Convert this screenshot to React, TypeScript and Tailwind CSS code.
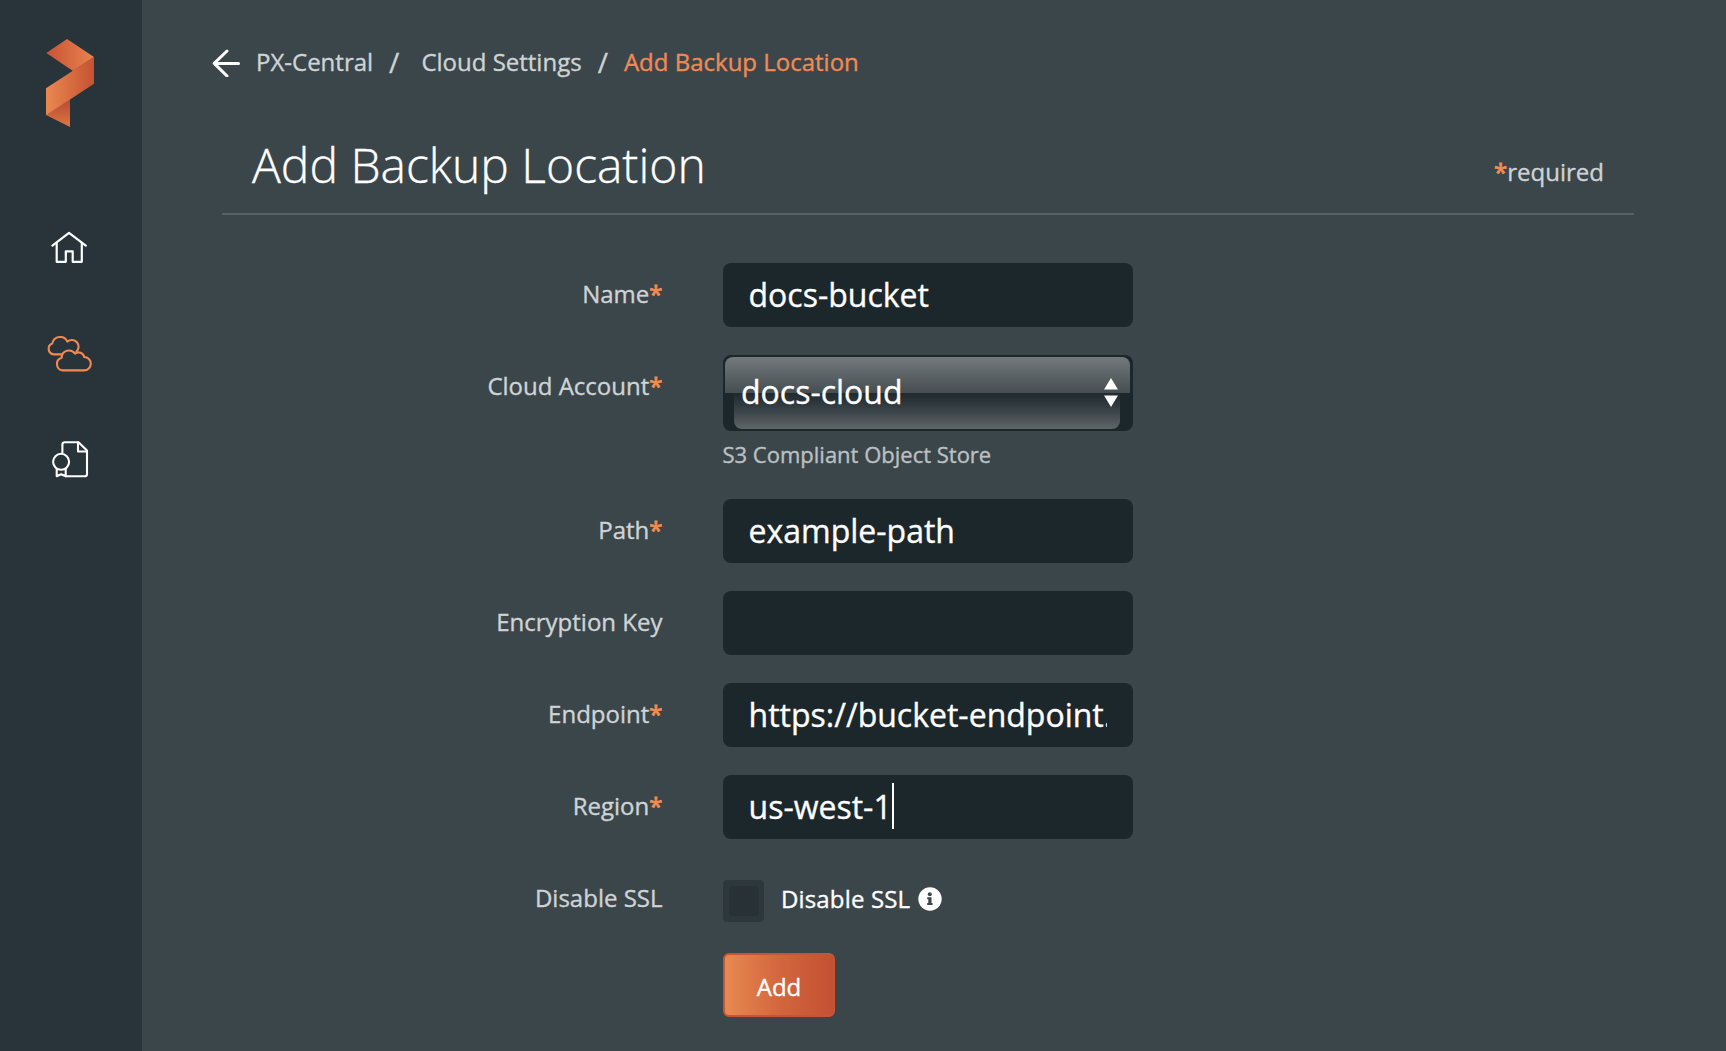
import React from "react";

function Logo() {
  return (
    <svg width="48" height="88" viewBox="0 0 48 88" className="block">
      <defs>
        <linearGradient id="lg-top" x1="0" x2="1" y1="0" y2="0">
          <stop offset="0" stopColor="#c85334" />
          <stop offset="1" stopColor="#e8834f" />
        </linearGradient>
        <linearGradient id="lg-band" x1="0" x2="1" y1="0" y2="0">
          <stop offset="0" stopColor="#e98850" />
          <stop offset="1" stopColor="#c65232" />
        </linearGradient>
        <linearGradient id="lg-tail" x1="0" x2="0" y1="0" y2="1">
          <stop offset="0.1" stopColor="#b94d33" />
          <stop offset="1" stopColor="#de7744" />
        </linearGradient>
      </defs>
      <path d="M0 76 L24 60 V88 Z" fill="url(#lg-tail)" />
      <path d="M0.3 14 L21 0 L48 18 L27 32 Z" fill="url(#lg-top)" />
      <path d="M48 18 V44.7 L0 76.3 V49.3 Z" fill="url(#lg-band)" />
    </svg>
  );
}

function HomeIcon() {
  return (
    <svg width="36" height="33" viewBox="0 0 36 33" fill="none" stroke="#fff" strokeWidth="2.2" strokeLinecap="round" strokeLinejoin="round" className="block">
      <path d="M1.4 14.6 L18 1.8 L34.8 14.6" />
      <path d="M5.7 12 V30.8 H14.8 V20.3 H21.7 V30.8 H30.8 V12" />
    </svg>
  );
}

function CloudsIcon() {
  return (
    <svg width="46" height="38" viewBox="0 0 46 38" fill="none" stroke="#f28a50" strokeWidth="2.1" strokeLinecap="round" strokeLinejoin="round" className="block">
      <path d="M15.3 20.4 H7.8 A5.7 5.7 0 0 1 6.3 9.4 A8 8 0 0 1 21.4 7.6 A6.7 6.7 0 0 1 30.3 17.8" />
      <path d="M16.7 36.4 H38 A6.7 6.7 0 0 0 38.2 23 A5.7 5.7 0 0 0 29 19.7 A7.3 7.3 0 0 0 15.7 23.7 A6.5 6.5 0 0 0 16.7 36.4 Z" />
    </svg>
  );
}

function LicenseIcon() {
  return (
    <svg width="37" height="37" viewBox="0 0 37 37" fill="none" stroke="#fff" strokeWidth="2.1" strokeLinecap="round" strokeLinejoin="round" className="block">
      <path d="M10.4 11.5 V3.5 Q10.4 1.3 12.8 1.3 H26.5 L35 9.5 V33 Q35 35.3 32.8 35.3 H14.2" />
      <path d="M26 1.6 V10.5 H34.8" />
      <circle cx="9.1" cy="20.8" r="8" />
      <path d="M4.7 28 V35.3 L9.1 33.2 L13.7 35.3 V28" />
    </svg>
  );
}

function Label({ text, required = true }: { text: string; required?: boolean }) {
  return (
    <div className="w-[520.5px] text-right text-[24px] leading-[61px] text-[#cfd3d5]">
      {text}
      {required && <span className="text-[#f58c50] [-webkit-text-stroke:0.8px]">*</span>}
    </div>
  );
}

function Field({ value, caret = false }: { value: string; caret?: boolean }) {
  return (
    <div className="flex h-16 w-[410px] items-center rounded-lg bg-[#1c272c] pl-[25.5px] pr-[26px] text-[32px] leading-[64px] text-white">
      <div className="overflow-hidden whitespace-nowrap">{value}</div>
      {caret && <div className="mb-0.5 h-[46px] w-0.5 shrink-0 bg-white" />}
    </div>
  );
}

function Row({ label, required, children }: { label: string; required?: boolean; children: React.ReactNode }) {
  return (
    <div className="flex items-start gap-[60.5px]">
      <Label text={label} required={required} />
      <div>{children}</div>
    </div>
  );
}

export default function App() {
  return (
    <div className="flex h-[1051px] w-[1726px] overflow-hidden bg-[#3b464b] font-['Open_Sans',sans-serif] [-webkit-text-stroke:0.35px]">
      <aside className="flex w-[142px] shrink-0 flex-col bg-[#283439]">
        <div className="ml-[46px] mt-[39px]"><Logo /></div>
        <div className="ml-[51px] mt-[104px]"><HomeIcon /></div>
        <div className="ml-[46px] mt-[70px]"><CloudsIcon /></div>
        <div className="ml-[52px] mt-[69px]"><LicenseIcon /></div>
      </aside>

      <main className="flex-1">
        <nav className="ml-[70px] mt-[44px] flex h-9 items-center whitespace-nowrap text-[24px] leading-9 text-[#cfd3d5]">
          <svg width="28" height="28" viewBox="0 0 28 28" fill="none" stroke="#fff" strokeWidth="3" strokeLinecap="round" strokeLinejoin="round" className="mt-px">
            <path d="M15 2 L2.2 14.4 L15 27 M2.5 14.4 H26.5" />
          </svg>
          <span className="ml-4">PX-Central</span>
          <span className="ml-4 text-[28px]">/</span>
          <span className="ml-[22px]">Cloud Settings</span>
          <span className="ml-4 text-[28px]">/</span>
          <span className="ml-4 text-[#f08a55]">Add Backup Location</span>
        </nav>

        <header className="ml-20 mt-[52px] flex h-[83px] w-[1412px] justify-between border-b-2 border-[#566168] pl-[30px] pr-[30px]">
          <h1 className="text-[48px] font-light leading-[66px] text-white">Add Backup Location</h1>
          <div className="text-[24px] leading-[80px] text-[#cfd3d5]">
            <span className="text-[#f58c50] [-webkit-text-stroke:0.8px]">*</span>required
          </div>
        </header>

        <form className="mt-12 flex flex-col gap-7">
          <Row label="Name"><Field value="docs-bucket" /></Row>
          <Row label="Cloud Account">
            <div className="h-[116px]">
              <div className="relative h-[76px] w-[410px] overflow-hidden rounded-lg border-2 border-[#1c272c] bg-[#1c272c]">
                <div className="mr-px h-9 rounded-t-lg bg-linear-to-b from-[#74797c] to-[#454e51]" />
                <div className="ml-[9px] mr-[11px] h-9 rounded-b-lg bg-linear-to-b from-[#20292e] via-[#3a4348] to-[#5f6668]" />
                <div className="absolute inset-0 flex items-center justify-between pb-0.5 pl-4 pr-[13px] text-[32px] text-white">
                  <span>docs-cloud</span>
                  <svg width="14" height="29" viewBox="0 0 14 29" fill="#fff" className="mt-px">
                    <path d="M0 11.5 L7 0 L14 11.5 Z M0 17.5 H14 L7 29 Z" />
                  </svg>
                </div>
              </div>
              <p className="-ml-[0.5px] mt-[7px] text-[22px] leading-8 text-[#bdc0c2]">S3 Compliant Object Store</p>
            </div>
          </Row>
          <Row label="Path"><Field value="example-path" /></Row>
          <Row label="Encryption Key" required={false}><Field value="" /></Row>
          <Row label="Endpoint"><Field value="https://bucket-endpoint." /></Row>
          <Row label="Region"><Field value="us-west-1" caret /></Row>
          <Row label="Disable SSL" required={false}>
            <div className="flex h-16 items-center">
              <div className="mt-1 flex h-[42px] w-[41px] items-center justify-center rounded bg-[#2d383d]">
                <div className="size-[30px] rounded bg-[#273136]" />
              </div>
              <span className="ml-[17px] text-[24px] tracking-[0.15px] text-white">Disable SSL</span>
              <svg width="24" height="24" viewBox="0 0 24 24" className="ml-[7.5px]">
                <circle cx="12" cy="12" r="11.7" fill="#fff" />
                <circle cx="11.8" cy="7.2" r="2" fill="#3b464b" />
                <path d="M9.2 10.3 H13.5 V16 H14.6 V18 H9.2 V16 H10.3 V12.3 H9.2 Z" fill="#3b464b" />
              </svg>
            </div>
          </Row>
          <div className="-mt-[6px] ml-[581px]">
            <button type="button" className="h-16 w-28 rounded-md border-2 border-[#c85436] bg-linear-to-r from-[#e78a50] via-[#d3663e] to-[#c45033] pt-1 text-[24px] text-white">Add</button>
          </div>
        </form>
      </main>
    </div>
  );
}
